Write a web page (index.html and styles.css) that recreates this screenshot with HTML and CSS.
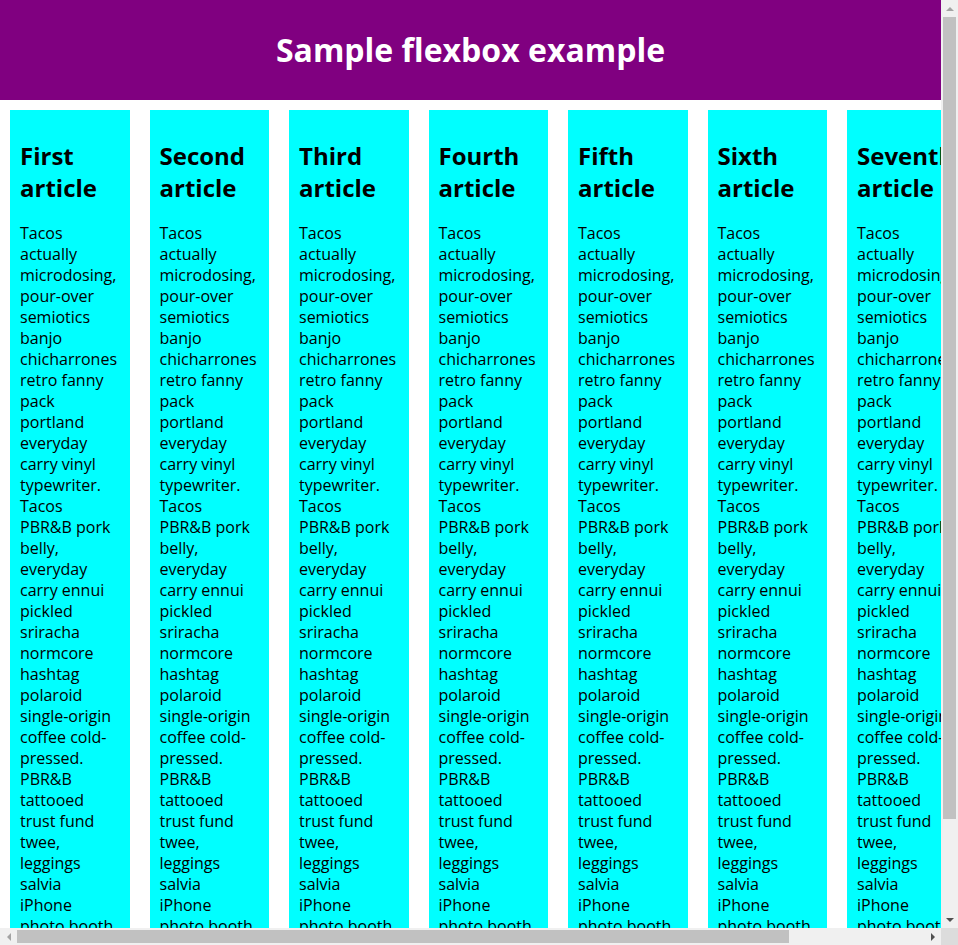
FILE: index.html
```html
<!DOCTYPE html>
<html lang="en">
<head>
<meta charset="utf-8">
<title>Flexbox 0</title>
<link rel="stylesheet" href="styles.css">
</head>
<body>
<div class="window">
  <div class="viewport">
    <header class="page-header">
      <h1>Sample flexbox example</h1>
    </header>
    <section class="articles">
      <article class="card">
        <h2>First article</h2>
        <p>Tacos actually microdosing, pour-over semiotics banjo chicharrones retro fanny pack portland everyday carry vinyl typewriter. Tacos PBR&amp;B pork belly, everyday carry ennui pickled sriracha normcore hashtag polaroid single-origin coffee cold-pressed. PBR&amp;B tattooed trust fund twee, leggings salvia iPhone photo booth health goth gastropub hammock.</p>
      </article>
      <article class="card">
        <h2>Second article</h2>
        <p>Tacos actually microdosing, pour-over semiotics banjo chicharrones retro fanny pack portland everyday carry vinyl typewriter. Tacos PBR&amp;B pork belly, everyday carry ennui pickled sriracha normcore hashtag polaroid single-origin coffee cold-pressed. PBR&amp;B tattooed trust fund twee, leggings salvia iPhone photo booth health goth gastropub hammock.</p>
      </article>
      <article class="card">
        <h2>Third article</h2>
        <p>Tacos actually microdosing, pour-over semiotics banjo chicharrones retro fanny pack portland everyday carry vinyl typewriter. Tacos PBR&amp;B pork belly, everyday carry ennui pickled sriracha normcore hashtag polaroid single-origin coffee cold-pressed. PBR&amp;B tattooed trust fund twee, leggings salvia iPhone photo booth health goth gastropub hammock.</p>
      </article>
      <article class="card">
        <h2>Fourth article</h2>
        <p>Tacos actually microdosing, pour-over semiotics banjo chicharrones retro fanny pack portland everyday carry vinyl typewriter. Tacos PBR&amp;B pork belly, everyday carry ennui pickled sriracha normcore hashtag polaroid single-origin coffee cold-pressed. PBR&amp;B tattooed trust fund twee, leggings salvia iPhone photo booth health goth gastropub hammock.</p>
      </article>
      <article class="card">
        <h2>Fifth article</h2>
        <p>Tacos actually microdosing, pour-over semiotics banjo chicharrones retro fanny pack portland everyday carry vinyl typewriter. Tacos PBR&amp;B pork belly, everyday carry ennui pickled sriracha normcore hashtag polaroid single-origin coffee cold-pressed. PBR&amp;B tattooed trust fund twee, leggings salvia iPhone photo booth health goth gastropub hammock.</p>
      </article>
      <article class="card">
        <h2>Sixth article</h2>
        <p>Tacos actually microdosing, pour-over semiotics banjo chicharrones retro fanny pack portland everyday carry vinyl typewriter. Tacos PBR&amp;B pork belly, everyday carry ennui pickled sriracha normcore hashtag polaroid single-origin coffee cold-pressed. PBR&amp;B tattooed trust fund twee, leggings salvia iPhone photo booth health goth gastropub hammock.</p>
      </article>
      <article class="card">
        <h2>Seventh article</h2>
        <p>Tacos actually microdosing, pour-over semiotics banjo chicharrones retro fanny pack portland everyday carry vinyl typewriter. Tacos PBR&amp;B pork belly, everyday carry ennui pickled sriracha normcore hashtag polaroid single-origin coffee cold-pressed. PBR&amp;B tattooed trust fund twee, leggings salvia iPhone photo booth health goth gastropub hammock.</p>
      </article>
      <article class="card">
        <h2>Eighth article</h2>
        <p>Tacos actually microdosing, pour-over semiotics banjo chicharrones retro fanny pack portland everyday carry vinyl typewriter. Tacos PBR&amp;B pork belly, everyday carry ennui pickled sriracha normcore hashtag polaroid single-origin coffee cold-pressed. PBR&amp;B tattooed trust fund twee, leggings salvia iPhone photo booth health goth gastropub hammock.</p>
      </article>
    </section>
  </div>
  <div class="vscroll">
    <div class="arrow-box"><span class="arrow arrow-up"></span></div>
    <div class="vtrack"><div class="vthumb"></div></div>
    <div class="arrow-box"><span class="arrow arrow-down"></span></div>
  </div>
  <div class="hscroll">
    <div class="arrow-box"><span class="arrow arrow-left"></span></div>
    <div class="htrack"><div class="hthumb"></div></div>
    <div class="arrow-box"><span class="arrow arrow-right"></span></div>
  </div>
  <div class="corner"></div>
</div>
</body>
</html>
```

FILE: styles.css
```css
html, body {
  margin: 0;
  padding: 0;
  height: 100%;
  overflow: hidden;
}

body {
  font-family: "Open Sans", "Noto Sans", sans-serif;
  color: #000000;
  background: #ffffff;
}

.window {
  display: grid;
  grid-template-columns: 941px 17px;
  grid-template-rows: 928px 17px;
  width: 958px;
  height: 945px;
}

.viewport {
  overflow: hidden;
  background: #ffffff;
}

/* page content */
.page-header {
  background: #800080;
  height: 100px;
}

.page-header h1 {
  margin: 0;
  text-align: center;
  color: #ffffff;
  font-size: 32px;
  font-weight: 700;
  line-height: 100px;
}

.articles {
  display: flex;
}

.card {
  flex: 0 0 auto;
  width: 97.25px;
  padding: 10px 12.25px 10px 10px;
  margin: 10px;
  background: #00ffff;
}

.card h2 {
  font-size: 24px;
  font-weight: 700;
  line-height: 31.5px;
  margin: 20px 0;
}

.card p {
  font-size: 16px;
  line-height: 21px;
  margin: 20px 0 16px;
}

/* scrollbars */
.vscroll {
  display: flex;
  flex-direction: column;
  background: #f0f0f0;
}

.hscroll {
  display: flex;
  flex-direction: row;
  background: #f0f0f0;
}

.arrow-box {
  flex: 0 0 17px;
  width: 17px;
  height: 17px;
  display: flex;
  align-items: center;
  justify-content: center;
}

.arrow {
  width: 0;
  height: 0;
  border-style: solid;
}

.arrow-up {
  border-width: 0 4px 4px 4px;
  border-color: transparent transparent #a3a3a3 transparent;
}

.arrow-down {
  border-width: 4px 4px 0 4px;
  border-color: #505050 transparent transparent transparent;
}

.arrow-left {
  border-width: 4px 4px 4px 0;
  border-color: transparent #a3a3a3 transparent transparent;
}

.arrow-right {
  border-width: 4px 0 4px 4px;
  border-color: transparent transparent transparent #505050;
}

.vtrack {
  flex: 1;
  padding: 0 2px;
}

.vthumb {
  height: 802px;
  background: #c1c1c1;
}

.htrack {
  flex: 1;
  padding: 2px 0;
}

.hthumb {
  width: 772px;
  height: 13px;
  background: #c1c1c1;
}

.corner {
  background: #dcdcdc;
}
```
